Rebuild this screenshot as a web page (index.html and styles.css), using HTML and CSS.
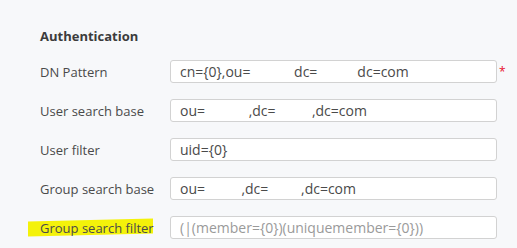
FILE: index.html
```html
<!DOCTYPE html>
<html lang="en">
<head>
    <meta charset="UTF-8">
    <title>Authentication</title>
    <link rel="stylesheet" href="styles.css">
</head>
<body>
    <div class="panel">
        <h3>Authentication</h3>

        <div class="row">
            <label for="dn">DN Pattern</label>
            <input type="text" id="dn" value="cn={0},ou=            dc=           dc=com">
            <span class="req">*</span>
        </div>

        <div class="row">
            <label for="usb">User search base</label>
            <input type="text" id="usb" value="ou=            ,dc=          ,dc=com">
        </div>

        <div class="row">
            <label for="uf">User filter</label>
            <input type="text" id="uf" value="uid={0}">
        </div>

        <div class="row">
            <label for="gsb">Group search base</label>
            <input type="text" id="gsb" value="ou=          ,dc=         ,dc=com">
        </div>

        <div class="row">
            <label for="gsf" class="marked">Group search filter</label>
            <input type="text" id="gsf" placeholder="(|(member={0})(uniquemember={0}))">
        </div>
    </div>
</body>
</html>
```

FILE: styles.css
```css
body {
    margin: 0;
    background-color: #f7f8fa;
    font-family: "Open Sans", Arial, sans-serif;
    font-size: 13px;
    color: #4a4a4a;
}

.panel {
    padding: 27px 0 0 40px;
}

h3 {
    margin: 0 0 15px 0;
    font-size: 13px;
    font-weight: bold;
    color: #3c3c3c;
}

.row {
    display: flex;
    align-items: center;
    height: 23px;
    margin-bottom: 16px;
}

.row label {
    width: 130px;
    flex-shrink: 0;
}

.row input {
    width: 327px;
    height: 23px;
    box-sizing: border-box;
    padding: 0 9px;
    border: 1px solid #d2d2d2;
    border-radius: 3px;
    background-color: #fff;
    font-family: "Open Sans", Arial, sans-serif;
    font-size: 14px;
    color: #4a4a4a;
}

.row input::placeholder {
    color: #9a9a9a;
}

.req {
    color: #e8102a;
    margin-left: 2px;
    font-size: 12px;
}

.marked {
    position: relative;
    z-index: 0;
}

.marked::before {
    content: "";
    position: absolute;
    left: -12px;
    top: 1px;
    width: 125px;
    height: 15px;
    background-color: #f4f20a;
    transform: skewY(-1.3deg);
    z-index: -1;
}
```
